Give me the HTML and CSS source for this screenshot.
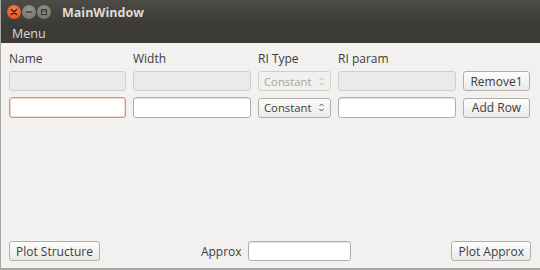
FILE: index.html
```html
<!DOCTYPE html>
<html lang="en">
<head>
  <meta charset="UTF-8" />
  <title>MainWindow</title>
  <link rel="stylesheet" href="styles.css">
</head>
<body>
  <div class="window">
    <div class="titlebar">
      <div class="wm-buttons">
        <span class="wm-btn close">
          <svg width="8" height="8" viewBox="0 0 8 8"><path d="M1.5 1.5 L6.5 6.5 M6.5 1.5 L1.5 6.5" stroke="#5a1a08" stroke-width="1.6" stroke-linecap="round"/></svg>
        </span>
        <span class="wm-btn">
          <svg width="8" height="8" viewBox="0 0 8 8"><path d="M1.5 4 H6.5" stroke="#3c3b37" stroke-width="1.6" stroke-linecap="round"/></svg>
        </span>
        <span class="wm-btn">
          <svg width="8" height="8" viewBox="0 0 8 8"><rect x="1.5" y="1.5" width="5" height="5" fill="none" stroke="#3c3b37" stroke-width="1.2"/><path d="M1.5 3.2 H6.5" stroke="#3c3b37" stroke-width="1"/></svg>
        </span>
      </div>
      <span class="title">MainWindow</span>
    </div>
    <div class="menubar"><span>Menu</span></div>

    <div class="content">
      <div class="grid">
        <span class="label">Name</span>
        <span class="label">Width</span>
        <span class="label">RI Type</span>
        <span class="label">RI param</span>
        <span></span>

        <input class="field" type="text" disabled />
        <input class="field" type="text" disabled />
        <div class="combo disabled">
          <span>Constant</span>
          <svg class="arrows" width="5" height="9" viewBox="0 0 5 9"><path d="M0.5 3 L2.5 1 L4.5 3 M0.5 6 L2.5 8 L4.5 6" fill="none" stroke="currentColor" stroke-width="1"/></svg>
        </div>
        <input class="field" type="text" disabled />
        <button class="btn">Remove1</button>

        <input class="field focused" type="text" />
        <input class="field" type="text" />
        <div class="combo">
          <span>Constant</span>
          <svg class="arrows" width="5" height="9" viewBox="0 0 5 9"><path d="M0.5 3 L2.5 1 L4.5 3 M0.5 6 L2.5 8 L4.5 6" fill="none" stroke="currentColor" stroke-width="1"/></svg>
        </div>
        <input class="field" type="text" />
        <button class="btn">Add Row</button>
      </div>

      <div class="footer">
        <button class="btn">Plot Structure</button>
        <div class="spacer"></div>
        <span class="label">Approx</span>
        <input class="field approx" type="text" />
        <div class="spacer"></div>
        <button class="btn">Plot Approx</button>
      </div>
    </div>
  </div>
</body>
</html>
```

FILE: styles.css
```css
body { margin: 0; font-family: "Open Sans", "Noto Sans", sans-serif; font-size: 12px; color: #3c3c3c; }
.window { width: 540px; height: 270px; display: flex; flex-direction: column; background: #f2f1f0; box-sizing: border-box; border-left: 1px solid #a8a6a2; border-bottom: 2px solid #a8a6a2; }
.titlebar { height: 24px; background: linear-gradient(#4c4b46, #3c3b37); display: flex; align-items: center; padding-left: 6px; }
.wm-buttons { display: flex; gap: 1px; }
.wm-btn { width: 14px; height: 14px; border-radius: 50%; background: radial-gradient(circle at 50% 35%, #9a9891, #6c6b65); display: flex; align-items: center; justify-content: center; }
.wm-btn.close { background: radial-gradient(circle at 50% 35%, #f6865a, #d6461c); }
.title { margin-left: 11px; color: #dfdbd2; font-weight: bold; font-size: 12.5px; }
.menubar { height: 19px; background: #3c3b37; color: #dfdbd2; font-size: 12.5px; padding-left: 11px; line-height: 20px; }
.content { flex: 1; display: flex; flex-direction: column; padding: 6px 9px 7px 8px; }
.grid { display: grid; grid-template-columns: 117px 118px 73px 118px 67px; grid-template-rows: 16px 20px 21px; column-gap: 7px; row-gap: 6px; align-items: center; }
.label { color: #3c3c3c; }
.grid .label { align-self: start; margin-top: 1px; }
.field { box-sizing: border-box; width: 100%; height: 100%; margin: 0; border: 1px solid #b2afab; border-radius: 3px; background: #fff; box-shadow: inset 0 1px 1px #e4e2df; font: inherit; }
.field:disabled { background: #ebeae8; border-color: #d0cdca; box-shadow: none; }
.field.focused { border-color: #e0906f; box-shadow: inset 0 0 0 1px #f6d9cc; }
.combo { box-sizing: border-box; height: 20px; border: 1px solid #b2afab; border-radius: 3px; background: linear-gradient(#fcfcfb, #ebeae8); display: flex; align-items: center; justify-content: space-between; padding: 0 6px 0 5px; color: #3c3c3c; font-size: 11.3px; }
.combo.disabled { color: #a9a7a3; border-color: #d3d0cc; background: #f1f0ef; }
.arrows { color: #555; }
.combo.disabled .arrows { color: #b5b3af; }
.btn { box-sizing: border-box; height: 20px; margin: 0; border: 1px solid #b2afab; border-radius: 3px; background: linear-gradient(#fdfdfc, #ebeae8); font: inherit; color: #3c3c3c; padding: 0 6px; }
.grid .btn { width: 100%; }
.footer { margin-top: auto; display: flex; align-items: center; gap: 6px; }
.spacer { flex: 1; }
.approx { width: 103px; height: 20px; }
```
